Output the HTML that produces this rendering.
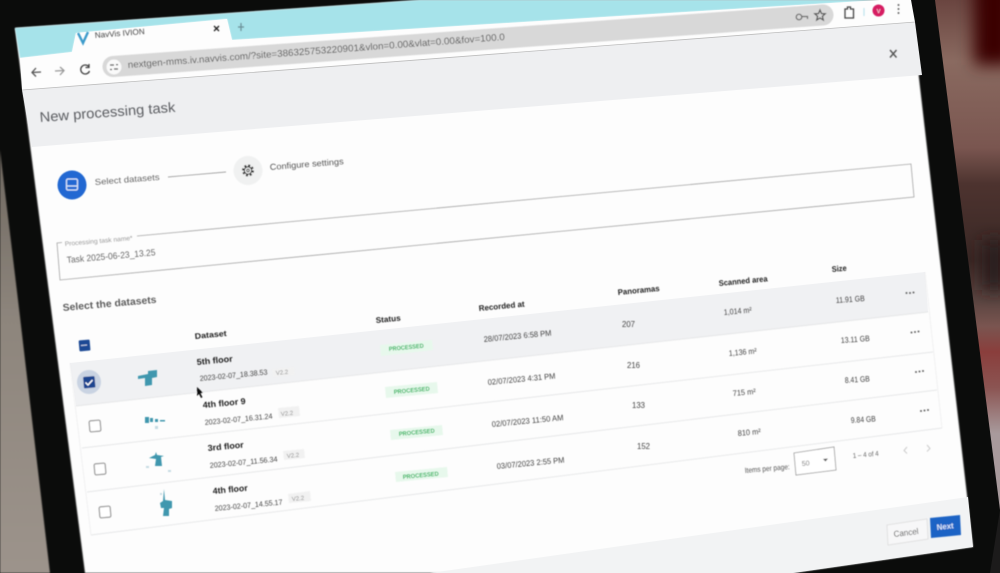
<!DOCTYPE html>
<html><head><meta charset="utf-8"><title>New processing task</title>
<style>
html,body{margin:0;padding:0;width:1000px;height:573px;overflow:hidden;background:#0c0c0c}
svg{display:block}
text{font-family:"Liberation Sans",sans-serif;fill:#333;font-size:8px}
.b{font-weight:bold;fill:#1c1c1c;font-size:8.5px}
.h{font-weight:bold;fill:#222;font-size:8px}
.s{font-size:7.5px;fill:#444}
.c{font-size:6px;fill:#888}
.p{font-size:6px;fill:#22b257;font-weight:bold}
.d{font-size:8px;fill:#444}
.i{fill:none;stroke:#555;stroke-width:1.3}
</style></head><body>
<svg width="1000" height="573" viewBox="0 0 1000 573" xmlns="http://www.w3.org/2000/svg">
<defs>
<filter id="bl" x="-10%" y="-10%" width="120%" height="120%"><feGaussianBlur stdDeviation="0.55"/></filter>
<filter id="bg" x="-50%" y="-50%" width="200%" height="200%"><feGaussianBlur stdDeviation="8"/></filter>
<filter id="e" x="-5%" y="-5%" width="110%" height="110%"><feGaussianBlur stdDeviation="0.8"/></filter>
<clipPath id="rc"><polygon points="935,0 1000,0 1000,510"/></clipPath>
<linearGradient id="tp" x1="0" y1="0" x2="0" y2="1"><stop offset="0" stop-color="#6f6860"/><stop offset=".4" stop-color="#8d857c"/><stop offset="1" stop-color="#9c938b"/></linearGradient>
<linearGradient id="rg" gradientUnits="userSpaceOnUse" x1="0" y1="0" x2="0" y2="510">
<stop offset="0" stop-color="#6a4540"/><stop offset=".12" stop-color="#8a6a60"/><stop offset=".29" stop-color="#7a5650"/>
<stop offset=".36" stop-color="#4d332f"/><stop offset=".51" stop-color="#3a2825"/><stop offset=".59" stop-color="#5b4541"/>
<stop offset=".64" stop-color="#7a5550"/><stop offset=".69" stop-color="#8a3e3c"/><stop offset=".76" stop-color="#8b5452"/>
<stop offset=".85" stop-color="#a89a9c"/><stop offset="1" stop-color="#a89a9c"/></linearGradient>
</defs>
<rect width="1000" height="573" fill="#0b0c0b"/>
<!-- surroundings -->
<polygon points="0,150 18,300 50,573 0,573" fill="url(#tp)" filter="url(#e)"/>
<g clip-path="url(#rc)">
<rect x="925" y="0" width="80" height="515" fill="url(#rg)"/>
<g filter="url(#bg)">
<rect x="974" y="-20" width="40" height="85" fill="#3a0403"/>
<rect x="982" y="240" width="24" height="50" fill="#2a1c1a"/>
</g></g>
<polygon points="1000,510 1000,573 990,573" fill="#1c1b1b"/>
<!-- screen -->
<g filter="url(#e)">
<polygon points="15,28 420,0 910,0 973,547 793,573 85,573" fill="#fdfdfd"/>
</g>
<g>
<polygon points="15,28 420,0 880,0 232,40 227,19 76,33 72,52 20,58" fill="#a6e3ea" filter="url(#e)"/>
<polygon points="20,58 72,52 76,33 227,19 232,40 880,0 911,0 915,22 22,90" fill="#fdfdfd"/>
<polygon points="22,90 915,22 922,75 32,147" fill="#eeeff1"/>
<polygon points="430,573 968,497 973,547 793,573" fill="#f2f3f4"/>
<line x1="22" y1="90" x2="915" y2="22" stroke="#bcbcbc" stroke-width=".8"/>
<polygon points="70,363 925,272 928,312 76,406" fill="#f0f1f3"/>
</g>
<g filter="url(#bl)">
<!-- address bar -->
<line x1="113" y1="66.5" x2="823" y2="15" stroke="#d8d8d8" stroke-width="21" stroke-linecap="round"/>
<circle cx="114" cy="67" r="7.5" fill="#fafafa"/>
<path d="M110 65h4M116 64.600h2M110 69.500h2M114 69h4" stroke="#444" stroke-width="1.2" fill="none"/>
<!-- tab -->
<path d="M78 33l5 10 5-11" fill="none" stroke="#3c9bcb" stroke-width="2.4"/>
<text transform="translate(95,38) rotate(-4.500)" textLength="50" lengthAdjust="spacingAndGlyphs" style="font-size:8px;fill:#444">NavVis IVION</text>
<path d="M214 26l5 5M219 26l-5 5" stroke="#222" stroke-width="1.300"/>
<path d="M241 23v8M238 27h6" stroke="#6b8f96" stroke-width="1.200"/>
<!-- nav icons -->
<path d="M41 72l-9 .5M36 68l-4 4.500 4 4" class="i"/>
<path d="M55 71l9-.5M60 67l4 3.500-4 4.500" class="i" style="stroke:#999"/>
<path d="M89 67a4.500 4.500 0 1 0 .5 4M89 64v3.500h-3.500" class="i" style="stroke:#444"/>
<text transform="translate(128,68) rotate(-4.250)" textLength="378" lengthAdjust="spacingAndGlyphs" style="font-size:9.500px;fill:#555">nextgen-mms.iv.navvis.com/?site=386325753220901&amp;vlon=0.00&amp;vlat=0.00&amp;fov=100.0</text>
<!-- right toolbar icons -->
<circle cx="799" cy="17" r="2.800" fill="none" stroke="#666" stroke-width="1.200"/><path d="M802 16.500h5.500v2.500" fill="none" stroke="#666" stroke-width="1.200"/>
<path d="M820 10l1.500 3.500 3.700.3-2.800 2.500.9 3.700-3.300-2-3.300 2 .9-3.700-2.800-2.500 3.700-.3z" class="i" style="stroke:#555"/>
<path d="M845 9h2.500v-2h3v2h3v9h-8.500z" class="i" style="stroke:#444"/>
<line x1="864" y1="8" x2="864" y2="16" stroke="#bfe4ee" stroke-width="1.200"/>
<circle cx="878.500" cy="10.500" r="6" fill="#d61b62"/>
<text x="876.800" y="13" style="font-size:5.500px;fill:#fff">V</text>
<circle cx="898.500" cy="5" r="1" fill="#666"/><circle cx="898.500" cy="9" r="1" fill="#666"/><circle cx="898.500" cy="13" r="1" fill="#666"/>
<path d="M890 50l6.500 7.500M896.500 50l-6.500 7.500" stroke="#555" stroke-width="1.400"/>
<!-- title -->
<text transform="translate(40,122) rotate(-4.300)" textLength="136" lengthAdjust="spacingAndGlyphs" style="font-size:14px;fill:#5a5c60">New processing task</text>
<!-- stepper -->
<circle cx="72" cy="185" r="14.500" fill="#2068d2"/>
<rect x="66.500" y="179" width="11" height="11" rx="1.500" fill="none" stroke="#d9e6fa" stroke-width="1.300"/>
<path d="M67 186h10" stroke="#d9e6fa" stroke-width="1.300"/>
<text transform="translate(95,185) rotate(-4.500)" textLength="65" lengthAdjust="spacingAndGlyphs" style="font-size:8.500px;fill:#666">Select datasets</text>
<line x1="168" y1="177" x2="226" y2="172" stroke="#888" stroke-width=".7"/>
<circle cx="248" cy="170.500" r="14.500" fill="#f0f1f1"/>
<circle cx="248" cy="170.500" r="5" fill="none" stroke="#222" stroke-width="2" stroke-dasharray="2 1.930"/>
<circle cx="248" cy="170.500" r="3.700" fill="none" stroke="#222" stroke-width="1.100"/>
<circle cx="248" cy="170.500" r="1.300" fill="none" stroke="#222" stroke-width=".8"/>
<text transform="translate(270,170) rotate(-4.500)" textLength="74" lengthAdjust="spacingAndGlyphs" style="font-size:8.500px;fill:#555">Configure settings</text>
<!-- boxes -->
<path d="M137 236L911 164L914 197L60 280L57 243L62 242.500" fill="none" stroke="#a5a5a5" stroke-width=".8"/>
<text transform="translate(65,246) rotate(-5)" textLength="68" lengthAdjust="spacingAndGlyphs" style="font-size:6.500px;fill:#999">Processing task name*</text>
<text transform="translate(67,263) rotate(-5)" textLength="89" lengthAdjust="spacingAndGlyphs" style="font-size:9px;fill:#666">Task 2025-06-23_13.25</text>
<text transform="translate(63,311) rotate(-5)" textLength="94" lengthAdjust="spacingAndGlyphs" style="font-size:10px;font-weight:bold;fill:#5c5c5c">Select the datasets</text>
<!-- table lines -->
<path d="M76 406L928 312M82 448L933 352M87 492L937 390M91 535L942 428" stroke="#e6e7e8" stroke-width=".9" fill="none"/>
<path d="M70 363L91 535M925 272L942 428" stroke="#eeeeef" stroke-width=".8" fill="none"/>
<!-- headers -->
<text class="h" transform="translate(195,339) rotate(-5.500)" textLength="32" lengthAdjust="spacingAndGlyphs">Dataset</text>
<text class="h" transform="translate(376,323) rotate(-5.500)" textLength="25" lengthAdjust="spacingAndGlyphs">Status</text>
<text class="h" transform="translate(479,311) rotate(-5.500)" textLength="46" lengthAdjust="spacingAndGlyphs">Recorded at</text>
<text class="h" transform="translate(618,295) rotate(-5.500)" textLength="42" lengthAdjust="spacingAndGlyphs">Panoramas</text>
<text class="h" transform="translate(719,286) rotate(-5.500)" textLength="49" lengthAdjust="spacingAndGlyphs">Scanned area</text>
<text class="h" transform="translate(832,272) rotate(-5.500)" textLength="15" lengthAdjust="spacingAndGlyphs">Size</text>
<!-- checkboxes -->
<rect x="79" y="340" width="11" height="11" rx="1" fill="#1f4a94" transform="rotate(-5 84 345)"/>
<path d="M81 345.500l6-.5" stroke="#cfd9ec" stroke-width="1"/>
<circle cx="89" cy="382" r="12" fill="#c9d3e2"/>
<rect x="83.500" y="376.500" width="11.500" height="11.500" rx="1" fill="#1f4590" transform="rotate(-5 89 382)"/>
<path d="M85.500 382.500l2.500 2.500 4.500-5" fill="none" stroke="#fff" stroke-width="1.400"/>
<rect x="89.500" y="420.500" width="11" height="11" rx="1.500" fill="#fff" stroke="#999" stroke-width="1.200" transform="rotate(-5 95 426)"/>
<rect x="94.500" y="463.500" width="11" height="11" rx="1.500" fill="#fff" stroke="#999" stroke-width="1.200" transform="rotate(-5 100 469)"/>
<rect x="99.500" y="506.500" width="11" height="11" rx="1.500" fill="#fff" stroke="#999" stroke-width="1.200" transform="rotate(-5 105 512)"/>
<!-- thumbnails -->
<g fill="#3f97ae">
<path d="M138 376l10-2v-3l9-1v7l-5 1v7l-7 1v-8l-7 1z"/>
<path d="M145 417h4v6h-4zM150 418h3v4h-3zM155 419h3v3h-3zM160 420h5v1.500h-5z"/>
<path d="M149 458l6-3 1-3 1 3 7 1-3 1 1 9h-7l1-7z"/>
<path d="M160 503l3-2 1-12 1 11 7 1v7l-3 1v7h-6l1-8-3 0z"/>
</g>
<g fill="#c6dce3"><rect x="146" y="466" width="3" height="2"/><rect x="168" y="470" width="3" height="2"/><rect x="155" y="426" width="3" height="3"/><rect x="160" y="493" width="2" height="2"/></g>
<!-- row 1 -->
<text class="b" transform="translate(197,365) rotate(-5.500)" textLength="36" lengthAdjust="spacingAndGlyphs">5th floor</text>
<text class="s" transform="translate(200,381) rotate(-5.500)" textLength="68" lengthAdjust="spacingAndGlyphs">2023-02-07_18.38.53</text>
<polygon points="272,369 294,367 295,375 273,377" fill="#f1f1f1"/>
<text class="c" transform="translate(276,375) rotate(-5.500)">V2.2</text>
<polygon points="380,345 432,340 433,350 381,356" fill="#e7f8ec"/>
<text class="p" transform="translate(389,351) rotate(-5.500)" textLength="35" lengthAdjust="spacingAndGlyphs">PROCESSED</text>
<text class="d" transform="translate(484,342) rotate(-5.500)" textLength="68" lengthAdjust="spacingAndGlyphs">28/07/2023 6:58 PM</text>
<text class="d" transform="translate(622,327)" textLength="13" lengthAdjust="spacingAndGlyphs">207</text>
<text class="d" transform="translate(724,315) rotate(-5)" textLength="28" lengthAdjust="spacingAndGlyphs">1,014 m²</text>
<text class="d" transform="translate(836,303) rotate(-4)" textLength="29" lengthAdjust="spacingAndGlyphs">11.91 GB</text>
<!-- row 2 -->
<text class="b" transform="translate(203,408) rotate(-5.500)" textLength="43" lengthAdjust="spacingAndGlyphs">4th floor 9</text>
<text class="s" transform="translate(205,425) rotate(-5.500)" textLength="68" lengthAdjust="spacingAndGlyphs">2023-02-07_16.31.24</text>
<polygon points="278,408 299,406 300,416 279,418" fill="#f1f1f1"/>
<text class="c" transform="translate(281,416) rotate(-5.500)">V2.2</text>
<polygon points="385,387 437,382 438,393 386,398" fill="#e7f8ec"/>
<text class="p" transform="translate(394,394) rotate(-5.500)" textLength="36" lengthAdjust="spacingAndGlyphs">PROCESSED</text>
<text class="d" transform="translate(488,385) rotate(-5.500)" textLength="68" lengthAdjust="spacingAndGlyphs">02/07/2023 4:31 PM</text>
<text class="d" transform="translate(627,368)" textLength="13" lengthAdjust="spacingAndGlyphs">216</text>
<text class="d" transform="translate(729,356) rotate(-5)" textLength="28" lengthAdjust="spacingAndGlyphs">1,136 m²</text>
<text class="d" transform="translate(841,343) rotate(-4)" textLength="29" lengthAdjust="spacingAndGlyphs">13.11 GB</text>
<!-- row 3 -->
<text class="b" transform="translate(208,451) rotate(-5.500)" textLength="36" lengthAdjust="spacingAndGlyphs">3rd floor</text>
<text class="s" transform="translate(210,468) rotate(-5.500)" textLength="68" lengthAdjust="spacingAndGlyphs">2023-02-07_11.56.34</text>
<polygon points="283,451 304,449 305,458 284,460" fill="#f1f1f1"/>
<text class="c" transform="translate(287,458) rotate(-5.500)">V2.2</text>
<polygon points="390,430 442,425 443,435 391,440" fill="#e7f8ec"/>
<text class="p" transform="translate(399,436) rotate(-5.500)" textLength="36" lengthAdjust="spacingAndGlyphs">PROCESSED</text>
<text class="d" transform="translate(492,427) rotate(-5.500)" textLength="72" lengthAdjust="spacingAndGlyphs">02/07/2023 11:50 AM</text>
<text class="d" transform="translate(632,408)" textLength="13" lengthAdjust="spacingAndGlyphs">133</text>
<text class="d" transform="translate(733,396) rotate(-5)" textLength="23" lengthAdjust="spacingAndGlyphs">715 m²</text>
<text class="d" transform="translate(845,383) rotate(-4)" textLength="25" lengthAdjust="spacingAndGlyphs">8.41 GB</text>
<!-- row 4 -->
<text class="b" transform="translate(213,494) rotate(-5.500)" textLength="35" lengthAdjust="spacingAndGlyphs">4th floor</text>
<text class="s" transform="translate(215,511) rotate(-5.500)" textLength="68" lengthAdjust="spacingAndGlyphs">2023-02-07_14.55.17</text>
<polygon points="288,494 310,491 311,501 289,503" fill="#f1f1f1"/>
<text class="c" transform="translate(292,501) rotate(-5.500)">V2.2</text>
<polygon points="395,472 447,467 448,477 396,482" fill="#e7f8ec"/>
<text class="p" transform="translate(403,479) rotate(-5.500)" textLength="36" lengthAdjust="spacingAndGlyphs">PROCESSED</text>
<text class="d" transform="translate(497,469) rotate(-5.500)" textLength="68" lengthAdjust="spacingAndGlyphs">03/07/2023 2:55 PM</text>
<text class="d" transform="translate(637,449)" textLength="13" lengthAdjust="spacingAndGlyphs">152</text>
<text class="d" transform="translate(738,436) rotate(-5)" textLength="23" lengthAdjust="spacingAndGlyphs">810 m²</text>
<text class="d" transform="translate(851,423) rotate(-4)" textLength="25" lengthAdjust="spacingAndGlyphs">9.84 GB</text>
<!-- more dots -->
<g fill="#666"><circle cx="906.500" cy="293" r="1"/><circle cx="910" cy="293" r="1"/><circle cx="913.500" cy="292.500" r="1"/>
<circle cx="911.500" cy="332.500" r="1"/><circle cx="915" cy="332" r="1"/><circle cx="918.500" cy="331.500" r="1"/>
<circle cx="916" cy="372" r="1"/><circle cx="919.500" cy="371.500" r="1"/><circle cx="923" cy="371" r="1"/>
<circle cx="921" cy="411" r="1"/><circle cx="924.500" cy="410.500" r="1"/><circle cx="928" cy="410" r="1"/></g>
<!-- pagination -->
<text transform="translate(745,473) rotate(-5)" textLength="45" lengthAdjust="spacingAndGlyphs" style="font-size:7.500px;fill:#555">Items per page:</text>
<polygon points="794,453 834,447 836,470 796,475" fill="#fff" stroke="#999" stroke-width=".8"/>
<text transform="translate(802,466) rotate(-5)" style="font-size:7px;fill:#777">50</text>
<path d="M823 459l5-.5-2.500 3z" fill="#555"/>
<text transform="translate(853,458) rotate(-5)" textLength="26" lengthAdjust="spacingAndGlyphs" style="font-size:7px;fill:#666">1 – 4 of 4</text>
<path d="M907 447l-3 3.500 3 3M927 445l3 3.500-3 3" fill="none" stroke="#ccc" stroke-width="1"/>
<!-- footer -->
<polygon points="887,525 927,519 928,539 888,545" fill="#f7f7f8" stroke="#dcdcdc" stroke-width=".8"/>
<text transform="translate(894,537) rotate(-7)" textLength="25" lengthAdjust="spacingAndGlyphs" style="font-size:8.500px;fill:#555">Cancel</text>
<polygon points="930,518 960,515 961,535 931,538" fill="#1f63c5"/>
<text transform="translate(937,530) rotate(-6)" textLength="17" lengthAdjust="spacingAndGlyphs" style="font-size:8px;fill:#dbe7fa;font-weight:bold">Next</text>
<!-- cursor -->
<path d="M197 387l0 9 2-2 2 4 1.500-.7-2-4 2.500-.5z" fill="#111"/>
</g>
</svg>
</body></html>
